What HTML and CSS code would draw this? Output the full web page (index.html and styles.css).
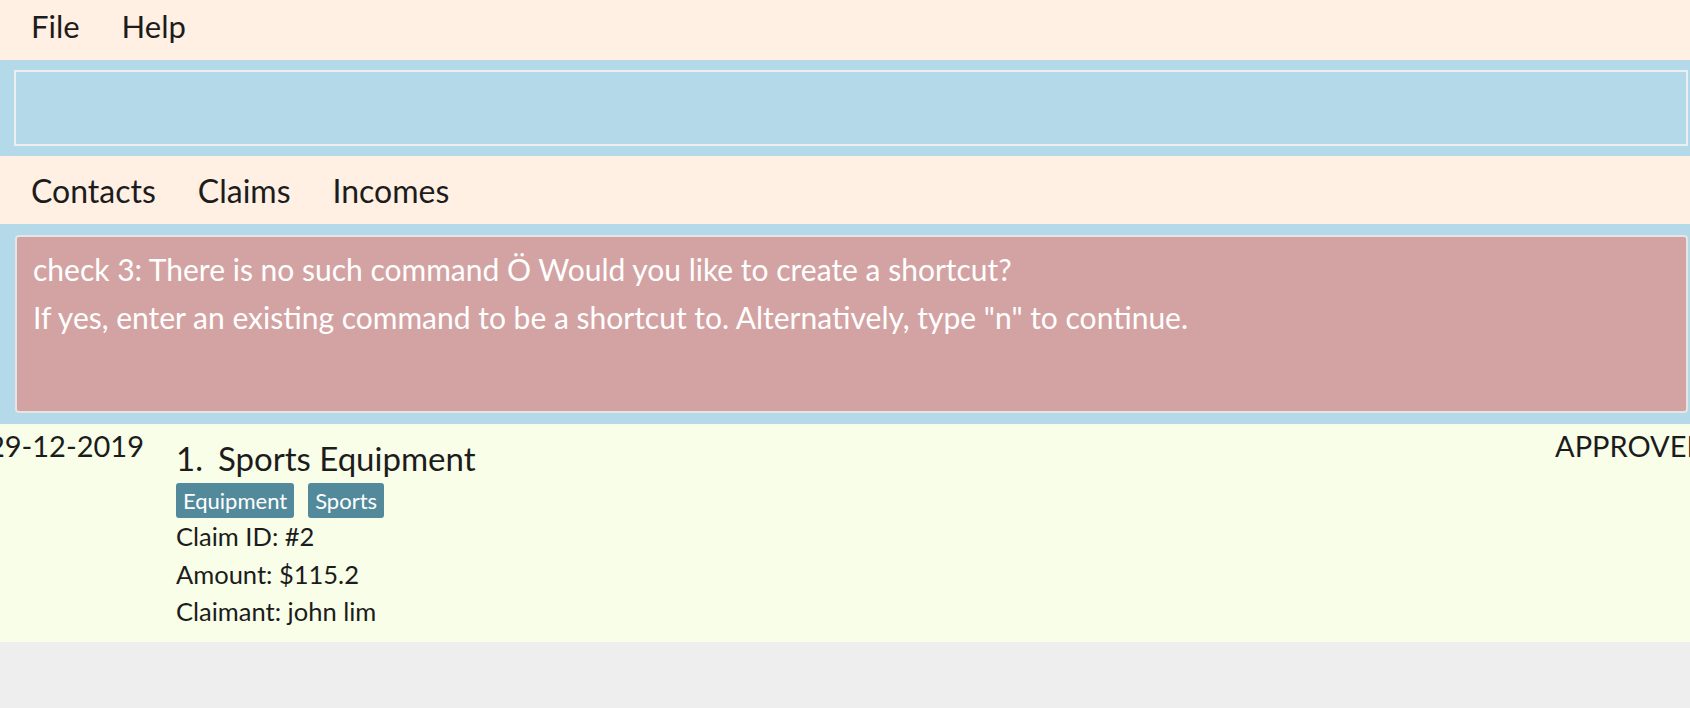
FILE: index.html
```html
<!DOCTYPE html>
<html>
<head>
<meta charset="utf-8">
<link rel="stylesheet" href="styles.css">
</head>
<body>
<div class="app">
  <nav class="menubar">
    <span class="menu-item">File</span>
    <span class="menu-item">Help</span>
  </nav>
  <section class="command-pane">
    <div class="command-box"></div>
  </section>
  <nav class="tabbar">
    <span class="tab">Contacts</span>
    <span class="tab">Claims</span>
    <span class="tab">Incomes</span>
  </nav>
  <section class="result-pane">
    <div class="result-box">
      <p class="result-line">check 3: There is no such command Ö Would you like to create a shortcut?</p>
      <p class="result-line">If yes, enter an existing command to be a shortcut to. Alternatively, type "n" to continue.</p>
    </div>
  </section>
  <section class="list">
    <article class="card">
      <div class="card-date"><span>29-12-2019</span></div>
      <div class="card-main">
        <div class="card-title"><span class="card-index">1.</span><span class="card-name">Sports Equipment</span></div>
        <div class="tags">
          <span class="tag">Equipment</span>
          <span class="tag">Sports</span>
        </div>
        <div class="detail">Claim ID: #2</div>
        <div class="detail">Amount: $115.2</div>
        <div class="detail">Claimant: john lim</div>
      </div>
      <div class="card-status">APPROVED</div>
    </article>
  </section>
</div>
</body>
</html>
```

FILE: styles.css
```css
html, body {
  margin: 0;
  padding: 0;
  height: 100%;
  overflow: hidden;
}

body {
  background: #eeeeee;
  font-family: "Lato", "Noto Sans", sans-serif;
  color: #1c1c1c;
}

.app {
  display: flex;
  flex-direction: column;
  width: 1690px;
}

.menubar {
  display: flex;
  align-items: center;
  height: 60px;
  padding-left: 10px;
  background: #fff0e3;
  box-sizing: border-box;
}

.menu-item {
  padding: 0 21px;
  font-size: 31px;
  line-height: 36px;
  margin-top: -8px;
}

.command-pane {
  background: #b4d9e8;
  padding: 10px 2px 10px 14px;
}

.command-box {
  height: 72px;
  border: 2px solid #eceff0;
}

.tabbar {
  display: flex;
  align-items: center;
  height: 68px;
  padding-left: 10px;
  background: #fff0e3;
  box-sizing: border-box;
}

.tab {
  padding: 0 21px;
  font-size: 32px;
  line-height: 36px;
  margin-top: 2px;
}

.result-pane {
  background: #b4d9e8;
  padding: 11px 2px 11px 15px;
}

.result-box {
  height: 178px;
  box-sizing: border-box;
  background: #d3a3a3;
  border: 2px solid #e9e4e4;
  border-radius: 4px;
  padding: 8px 16px;
  color: #ffffff;
}

.result-line {
  margin: 0;
  font-size: 30px;
  line-height: 48px;
}

.list {
  background: #f8fee8;
}

.card {
  display: flex;
  height: 218px;
  box-sizing: border-box;
  padding-top: 5px;
}

.card-date {
  width: 144px;
  flex: none;
  display: flex;
  justify-content: flex-end;
  font-size: 29px;
  line-height: 34px;
  white-space: nowrap;
}

.card-main {
  flex: 1;
  padding-left: 32px;
  display: flex;
  flex-direction: column;
}

.card-title {
  font-size: 33px;
  line-height: 38px;
  margin-top: 10px;
}

.card-index {
  margin-right: 15px;
}

.tags {
  display: flex;
  gap: 14px;
  margin: 6px 0 0;
}

.tag {
  background: #528a9b;
  color: #ffffff;
  font-size: 22px;
  line-height: 35px;
  padding: 0 7px;
  border-radius: 3px;
}

.detail {
  font-size: 25.5px;
  line-height: 37.5px;
}

.card-status {
  flex: none;
  width: 135px;
  font-size: 29px;
  line-height: 34px;
  white-space: nowrap;
}
```
